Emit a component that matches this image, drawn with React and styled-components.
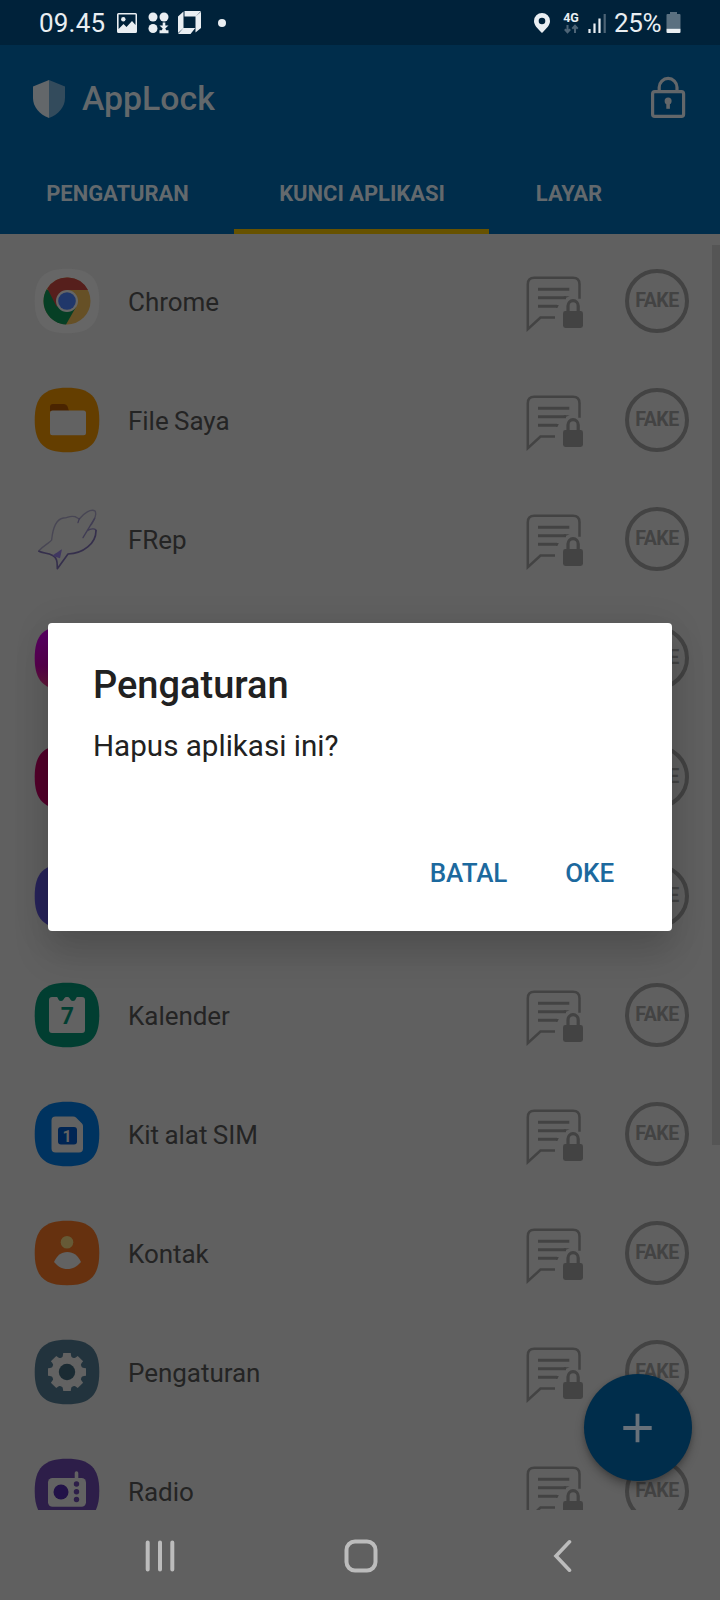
import React from "react";
import styled, { createGlobalStyle } from "styled-components";

const Global = createGlobalStyle`
  * { box-sizing: border-box; }
  body { margin: 0; background: #606060; font-family: Roboto, "Liberation Sans", sans-serif; }
`;

const Screen = styled.div`
  position: relative;
  width: 720px;
  height: 1600px;
  display: flex;
  flex-direction: column;
  overflow: hidden;
  background: #606060;
`;

const StatusBar = styled.header`
  height: 45px;
  flex: none;
  display: flex;
  align-items: center;
  justify-content: space-between;
  padding: 0 39px 0 39px;
  background: #00223a;
  color: #e9eef2;
`;

const StatusGroup = styled.div`
  display: flex;
  align-items: center;
`;

const StatusText = styled.span`
  width: ${(p) => p.$width}px;
  font-size: 26px;
  line-height: 44px;
  padding-top: 1px;
  letter-spacing: ${(p) => p.$track || 0}px;
  white-space: nowrap;
`;

const Glyph = styled.svg`
  display: block;
  flex: none;
  margin-left: ${(p) => p.$gap || 0}px;
`;

const AppBar = styled.div`
  height: 189px;
  flex: none;
  background: #002d4b;
`;

const Toolbar = styled.div`
  height: 107px;
  display: flex;
  align-items: center;
  padding: 0 34px 0 32px;
`;

const Title = styled.h1`
  flex: 1;
  margin: 0 0 0 16px;
  font-size: 33.8px;
  font-weight: 500;
  line-height: 40px;
  color: #63686b;
`;

const Tabs = styled.nav`
  display: grid;
  grid-template-columns: 234px 255px 159px;
  height: 82px;
`;

const Tab = styled.div`
  display: flex;
  align-items: center;
  justify-content: center;
  padding: 5px 0 0 1px;
  border-bottom: 5px solid ${(p) => (p.$active ? "#675200" : "transparent")};
  font-size: 22px;
  font-weight: 700;
  letter-spacing: -0.05px;
  color: #63696d;
  white-space: nowrap;
`;

const ListArea = styled.main`
  position: relative;
  height: 1276px;
  flex: none;
  padding-top: 7px;
  overflow: hidden;
`;

const Scrollbar = styled.div`
  position: absolute;
  right: 0;
  top: 11px;
  width: 8px;
  height: 900px;
  background: #555555;
`;

const Row = styled.div`
  height: 119px;
  display: flex;
  align-items: flex-start;
  padding: 27px 31px 0 34px;
`;

const AppName = styled.div`
  flex: 1;
  margin: 0 0 0 28px;
  padding-top: 2px;
  font-size: 26px;
  line-height: 64px;
  letter-spacing: -0.04px;
  word-spacing: -1px;
  color: #242424;
`;

const FakeBadge = styled.div`
  width: 64px;
  height: 64px;
  margin: 1px 0 0 40px;
  display: flex;
  align-items: center;
  justify-content: center;
  border: 4px solid #434343;
  border-radius: 50%;
  font-size: 19.5px;
  font-weight: 700;
  line-height: 20px;
  letter-spacing: -0.5px;
  color: #434343;
`;

const Fab = styled.button`
  position: absolute;
  left: 584px;
  top: 1374px;
  width: 108px;
  height: 107px;
  padding: 0;
  display: flex;
  align-items: center;
  justify-content: center;
  border: 0;
  border-radius: 50%;
  background: #002d4b;
  box-shadow: 0 6px 10px rgba(0, 0, 0, 0.26), 0 1px 4px rgba(0, 0, 0, 0.16);
`;

const NavBar = styled.footer`
  height: 90px;
  display: grid;
  grid-template-columns: repeat(3, 201px);
  justify-content: center;
  align-items: center;
  justify-items: center;
  padding: 2px 0 0 1px;
`;

const Overlay = styled.div`
  position: absolute;
  inset: 0;
  display: flex;
  align-items: flex-start;
  justify-content: center;
  padding-top: 623px;
`;

const Dialog = styled.section`
  width: 624px;
  height: 308px;
  padding: 40px 58px 0 45px;
  border-radius: 4px;
  background: #ffffff;
  color: #212121;
  box-shadow: 0 24px 36px rgba(0, 0, 0, 0.13), 0 4px 36px rgba(0, 0, 0, 0.11);
`;

const DialogTitle = styled.h2`
  margin: 0;
  font-size: 38px;
  font-weight: 500;
  line-height: 44px;
`;

const DialogText = styled.p`
  margin: 21px 0 0;
  font-size: 29.6px;
  line-height: 36px;
`;

const DialogActions = styled.div`
  display: flex;
  justify-content: flex-end;
  gap: 58px;
  margin-top: 91px;
`;

const DialogButton = styled.button`
  padding: 0;
  border: 0;
  background: none;
  font: 500 26px/36px Roboto, "Liberation Sans", sans-serif;
  letter-spacing: -0.1px;
  color: #1c699e;
`;

const Squircle = ({ fill }) => (
  <path
    fill={fill}
    d="M33 .7C56 .7 65.3 10 65.3 33S56 65.3 33 65.3.7 56 .7 33 10 .7 33 .7Z"
  />
);

const art = {
  chrome: (
    <>
      <Squircle fill="#666666" />
      <circle cx="33" cy="33" r="23.5" fill="#665026" />
      <path d="M33 33 12.7 21.2A23.5 23.5 0 0 0 32 56.5L42 39Z" fill="#063f25" />
      <path d="M33 33 22.5 38.5 13.3 20.5A23.5 23.5 0 0 1 54 22H33Z" fill="#561f1c" />
      <circle cx="33" cy="33" r="11" fill="#666666" />
      <circle cx="33" cy="33" r="8.8" fill="#20376a" />
    </>
  ),
  files: (
    <>
      <Squircle fill="#643e00" />
      <path d="M16 24V20q0-3 3-3h11q2.500 0 3.500 2.500L35 24Z" fill="#4a2400" />
      <rect x="16" y="23.500" width="36" height="24.800" rx="2.500" fill="#626262" />
    </>
  ),
  frep: (
    <g
      transform="translate(-34 -256) scale(.33333)"
      fill="none"
      strokeLinejoin="round"
      strokeLinecap="round"
    >
      <path
        d="M116 903C136 882 150 878 155 870 158 838 168 808 190 804 205 804 207 796 225 800L238 807C250 790 274 774 286 784 290 795 283 810 274 824"
        stroke="#484654"
        strokeWidth="4"
      />
      <path d="M238 806 234 818M284 805 249 863M262 842C276 832 288 838 288 842" stroke="#403c54" strokeWidth="4" />
      <path d="M288 842C288 880 250 911 204 912L172 956C171 940 174 925 157 916 145 908 128 910 117 904" stroke="#352f4c" strokeWidth="5" />
      <path d="M157 917C168 910 178 903 186 898L180 925Z" fill="#403761" />
    </g>
  ),
  galaxy: (
    <>
      <defs>
        <linearGradient id="galaxyFill" x1="0" y1="0" x2="0" y2="1">
          <stop offset="0.2" stopColor="#580060" />
          <stop offset="0.6" stopColor="#58004f" />
          <stop offset="1" stopColor="#601c33" />
        </linearGradient>
      </defs>
      <Squircle fill="url(#galaxyFill)" />
    </>
  ),
  gallery: <Squircle fill="#53002a" />,
  internet: <Squircle fill="#27235a" />,
  calendar: (
    <>
      <Squircle fill="#013e31" />
      <path
        d="M18 15h5c1 0 1 4 4 4s3-4 5-4h2c2 0 2 4 5 4s3-4 4-4h5q3 0 3 3v30q0 3-3 3H18q-3 0-3-3V18q0-3 3-3Z"
        fill="#626262"
      />
      <text x="33.300" y="41.500" textAnchor="middle" fontSize="23" fontWeight="700" fill="#013e31">7</text>
    </>
  ),
  sim: (
    <>
      <Squircle fill="#00335f" />
      <path d="M21 15.500H39q2 0 3 1L48 22.500q1 1 1 2.500V47.500q0 4-4 4H21.500q-4 0-4-4V19.500q0-4 4-4Z" fill="#626262" />
      <rect x="24" y="26" width="19" height="17.500" rx="3" fill="#002554" />
      <text x="33" y="40.500" textAnchor="middle" fontSize="16" fontWeight="700" fill="#626262">1</text>
    </>
  ),
  contact: (
    <>
      <Squircle fill="#66310f" />
      <circle cx="33" cy="22.300" r="6.300" fill="#665a36" />
      <path d="M20 42C23 35.500 27 32 33.300 32S44 35.500 47 42C43 46.500 39 49 33.300 49S24 46.500 20 42Z" fill="#626262" />
    </>
  ),
  settings: (
    <>
      <Squircle fill="#22333d" />
      <circle cx="33" cy="33" r="15.500" fill="#626262" />
      {[0, 45, 90, 135, 180, 225, 270, 315].map((a) => (
        <path key={a} d="M27 19.500Q29 18.500 29.200 14H36.800Q37 18.500 39 19.500Z" fill="#626262" transform={`rotate(${a} 33 33)`} />
      ))}
      <circle cx="33" cy="33" r="8.200" fill="#1a2b33" />
    </>
  ),
  radio: (
    <>
      <Squircle fill="#2d1e49" />
      <path d="M42.500 21V15" stroke="#626262" strokeWidth="3.600" strokeLinecap="round" />
      <rect x="14" y="20" width="38" height="28.700" rx="4.500" fill="#626262" />
      <circle cx="27" cy="34" r="7.500" fill="#221248" />
      <circle cx="42.500" cy="26" r="2.700" fill="#2d1e49" />
      <circle cx="42.500" cy="33.800" r="2.700" fill="#2d1e49" />
      <circle cx="42.500" cy="41.500" r="2.700" fill="#2d1e49" />
    </>
  ),
};

const AppIcon = ({ kind }) => (
  <Glyph width="66" height="66" viewBox="0 0 66 66">{art[kind]}</Glyph>
);

const MessageLock = () => (
  <Glyph width="60" height="65" viewBox="0 -3 60 65" fill="none" stroke="#434343">
    <path
      d="M54.500 27.700V13.200q0-6.500-6.500-6.500H9.300q-6.500 0-6.500 6.500V58.200L15.500 46.600H30"
      strokeWidth="2.500"
    />
    <path d="M13 18.300H44.300M13 26.700H41M13 35.300H32" strokeWidth="2.900" />
    <path d="M39 25.300h5.500L38.500 28.100ZM31 33.900h2.700l-1 2.800H31Z" fill="#434343" stroke="none" />
    <path d="M43 41V35a5.100 5.300 0 0 1 10.200 0v6" strokeWidth="3.200" />
    <rect x="38" y="40" width="20" height="17" rx="2.400" fill="#434343" stroke="none" />
  </Glyph>
);

const apps = [
  { name: "Chrome", kind: "chrome" },
  { name: "File Saya", kind: "files" },
  { name: "FRep", kind: "frep" },
  { name: "", kind: "galaxy" },
  { name: "", kind: "gallery" },
  { name: "", kind: "internet" },
  { name: "Kalender", kind: "calendar" },
  { name: "Kit alat SIM", kind: "sim" },
  { name: "Kontak", kind: "contact" },
  { name: "Pengaturan", kind: "settings" },
  { name: "Radio", kind: "radio" },
];

const NotificationIcons = () => (
  <>
    <Glyph $gap={10} width="20" height="20" viewBox="0 0 20 20" fill="#e9eef2">
      <path fillRule="evenodd" d="M1.500 0h17Q20 0 20 1.500v17q0 1.500-1.500 1.500h-17Q0 20 0 18.500v-17Q0 0 1.500 0ZM1.600 1.600V16L6.500 11l3 3 5.500-6 3.500 4V1.600Z" />
      <circle cx="6.300" cy="6.200" r="2.200" />
    </Glyph>
    <Glyph $gap={11} width="21" height="22" viewBox="0 0 21 22" fill="#e9eef2">
      <circle cx="5" cy="5" r="4.500" />
      <circle cx="16" cy="5" r="4.500" />
      <circle cx="5" cy="16.500" r="4.500" />
      <path d="M14.700 10.500h2.600v3h3.200l-3.200 3 .9 1.800h2.300v2.900h-9v-2.900h2.300l.9-1.800-3.200-3h3.200Z" />
    </Glyph>
    <Glyph $gap={9} width="23" height="23" viewBox="0 0 23 23" fill="#e9eef2">
      <path d="M6.500 0H23l-5.500 5.500H6.500ZM0 5.500 5.500.500V17L0 22ZM23 .8V17l-5.500 4.500V5.500ZM5.500 17H17.300L12.500 23H0Z" />
    </Glyph>
    <Glyph $gap={17} width="8" height="8" viewBox="0 0 8 8" fill="#e9eef2">
      <circle cx="4" cy="4" r="4" />
    </Glyph>
  </>
);

const SystemIcons = () => (
  <>
    <Glyph width="16" height="20" viewBox="0 0 16 20" fill="#e9eef2">
      <path fillRule="evenodd" d="M8 0a8 8 0 0 1 8 8c0 4-3 7-8 12C3 15 0 12 0 8a8 8 0 0 1 8-8Zm0 4.700a3.300 3.300 0 1 0 0 6.600 3.300 3.300 0 0 0 0-6.600Z" />
    </Glyph>
    <Glyph $gap={10} width="22" height="32" viewBox="-2 -5 22 32">
      <text x="9" y="10" textAnchor="middle" fontSize="12.500" fontWeight="700" fill="#e9eef2">4G</text>
      <path d="M5.500 13v7M2.800 17.300l2.700 2.900 2.700-2.900M13 21v-7M10.300 16.700 13 13.800l2.700 2.900" fill="none" stroke="#4d6476" strokeWidth="2" />
    </Glyph>
    <Glyph $gap={5} width="20" height="20" viewBox="0 0 20 20">
      <path d="M2.500 16v4M7.500 10.500V20M12.500 5.500V20" stroke="#e9eef2" strokeWidth="2.200" />
      <path d="M17.700 1v19" stroke="#4d6476" strokeWidth="2.200" />
    </Glyph>
  </>
);

export default function App() {
  return (
    <Screen>
      <Global />
      <StatusBar>
        <StatusGroup>
          <StatusText $width={68} $track={0.2}>09.45</StatusText>
          <NotificationIcons />
        </StatusGroup>
        <StatusGroup>
          <SystemIcons />
          <Glyph width="7" height="1" />
          <StatusText $width={50} $track={-0.4}>25%</StatusText>
          <Glyph $gap={2} width="15" height="22" viewBox="0 0 15 22">
            <path d="M4 0h7v2h2.500q1 0 1 1v13H.5V3q0-1 1-1H4Z" fill="#5a7080" />
            <path d="M.5 16.500h14V20q0 1-1 1h-12q-1 0-1-1Z" fill="#e9eef2" />
          </Glyph>
        </StatusGroup>
      </StatusBar>

      <AppBar>
        <Toolbar>
          <Glyph width="34" height="40" viewBox="0 0 34 40">
            <path d="M17 1 1 7.500V19c0 9 6.500 16.500 16 20Z" fill="#63676a" />
            <path d="M17 1l16 6.500V19c0 9-6.500 16.500-16 20Z" fill="#334b5c" />
          </Glyph>
          <Title>AppLock</Title>
          <Glyph width="36" height="46" viewBox="-1 0 36 46" fill="none" stroke="#63676a" strokeWidth="3.200">
            <rect x="1.600" y="15.600" width="31" height="24.800" rx="2.200" />
            <path d="M8.200 15.500V11.300a8.900 8.900 0 0 1 17.800 0v4.200" />
            <circle cx="17.100" cy="25" r="3.500" fill="#63676a" stroke="none" />
            <path d="M17.100 25v7.800" strokeWidth="3.600" />
          </Glyph>
        </Toolbar>
        <Tabs>
          <Tab>PENGATURAN</Tab>
          <Tab $active>KUNCI APLIKASI</Tab>
          <Tab>LAYAR</Tab>
        </Tabs>
      </AppBar>

      <ListArea>
        {apps.map((app) => (
          <Row key={app.kind}>
            <AppIcon kind={app.kind} />
            <AppName>{app.name}</AppName>
            <MessageLock />
            <FakeBadge>FAKE</FakeBadge>
          </Row>
        ))}
        <Scrollbar />
      </ListArea>

      <NavBar>
        <Glyph width="32" height="34" viewBox="0 0 32 34" stroke="#bcbcbc" strokeWidth="4" strokeLinecap="round">
          <path d="M3.700 3.500v27M16 3.500v27M28.300 3.500v27" />
        </Glyph>
        <Glyph width="34" height="34" viewBox="0 0 34 34" fill="none" stroke="#bcbcbc" strokeWidth="4">
          <rect x="2.500" y="2.500" width="29" height="29" rx="8.500" />
        </Glyph>
        <Glyph width="20" height="34" viewBox="0 0 20 34" fill="none" stroke="#bcbcbc" strokeWidth="3.600" strokeLinecap="round">
          <path d="M17.500 2.800 4 17 17.500 31.200" />
        </Glyph>
      </NavBar>

      <Fab aria-label="+">
        <Glyph width="30" height="30" viewBox="0 0 30 30" stroke="#68717a" strokeWidth="3.800">
          <path d="M14.500 .8v28.400M.3 15h28.400" />
        </Glyph>
      </Fab>

      <Overlay>
        <Dialog>
          <DialogTitle>Pengaturan</DialogTitle>
          <DialogText>Hapus aplikasi ini?</DialogText>
          <DialogActions>
            <DialogButton>BATAL</DialogButton>
            <DialogButton>OKE</DialogButton>
          </DialogActions>
        </Dialog>
      </Overlay>
    </Screen>
  );
}
